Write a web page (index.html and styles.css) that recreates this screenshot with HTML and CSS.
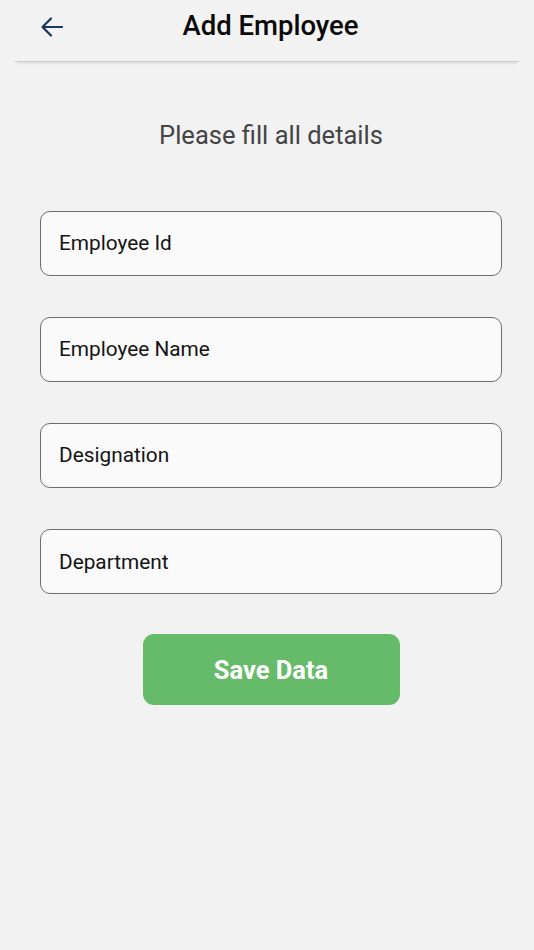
FILE: index.html
```html
<!DOCTYPE html>
<html>
<head>
<meta charset="utf-8">
<link rel="stylesheet" href="styles.css">
</head>
<body>
<header class="appbar">
  <span class="back">
    <svg width="24" height="22" viewBox="0 0 24 22"><path d="M22 11H3M11 2.5L2.5 11L11 19.5" fill="none" stroke="#17355e" stroke-width="2.2" stroke-linecap="round" stroke-linejoin="round"/></svg>
  </span>
  <h1 class="title">Add Employee</h1>
</header>
<main class="content">
  <p class="subtitle">Please fill all details</p>
  <div class="form">
    <div class="field">Employee Id</div>
    <div class="field">Employee Name</div>
    <div class="field">Designation</div>
    <div class="field">Department</div>
  </div>
  <button class="save">Save Data</button>
</main>
</body>
</html>
```
FILE: styles.css
```css
html, body {
  margin: 0;
  padding: 0;
  background: #f2f2f2;
  font-family: Roboto, "Liberation Sans", sans-serif;
}
.appbar {
  margin: 0 15px;
  height: 61px;
  position: relative;
  display: flex;
  align-items: center;
  justify-content: center;
  border-bottom: 1px solid #cccccc;
  box-shadow: 0 3px 3px -2px rgba(0,0,0,0.12);
}
.back {
  position: absolute;
  left: 25px;
  top: 16px;
  display: flex;
}
.title {
  margin: 0;
  margin-top: -11px;
  padding-left: 7px;
  font-size: 27.5px;
  font-weight: 500;
  color: #0a0a0a;
}
.content {
  display: flex;
  flex-direction: column;
  align-items: center;
  padding-left: 8px;
}
.subtitle {
  margin: 57px 0 0;
  font-size: 25.5px;
  line-height: 32px;
  color: #444;
}
.form {
  margin-top: 60px;
  width: 462px;
  display: flex;
  flex-direction: column;
  gap: 41.6px;
}
.field {
  box-sizing: border-box;
  height: 64.5px;
  border: 1.6px solid #6e6e6e;
  border-radius: 10px;
  background: #fafafa;
  padding-left: 18px;
  display: flex;
  align-items: center;
  font-size: 20.8px;
  color: #141414;
}
.save {
  margin-top: 40.5px;
  width: 257px;
  height: 70.5px;
  border: none;
  border-radius: 11px;
  background: #66bb6a;
  color: #fff;
  font-family: Roboto, "Liberation Sans", sans-serif;
  font-weight: 700;
  font-size: 25.5px;
}
```
